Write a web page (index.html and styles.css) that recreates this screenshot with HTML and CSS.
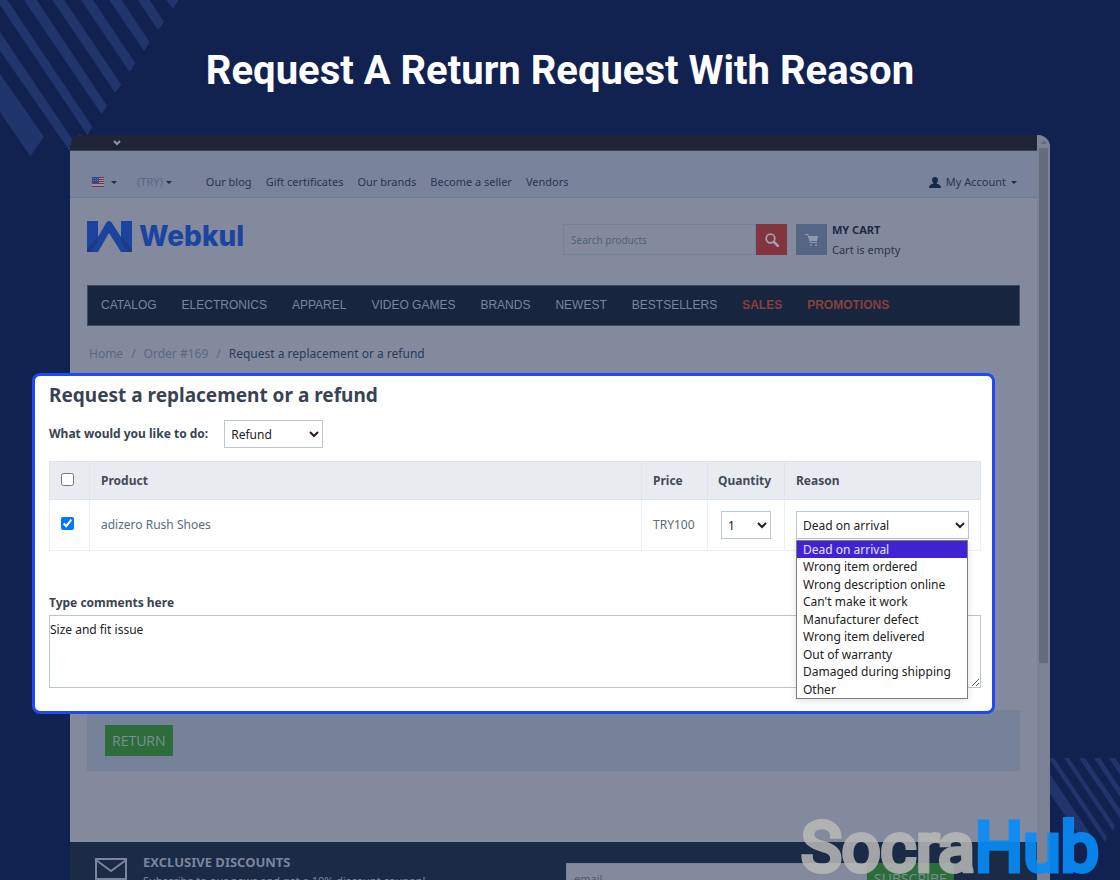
FILE: index.html
```html
<!DOCTYPE html>
<html lang="en">
<head>
    <meta charset="utf-8">
    <title>Request A Return Request With Reason</title>
    <link rel="stylesheet" href="styles.css">
</head>
<body>
<svg class="stripes stripes-top" viewBox="0 0 540 480" aria-hidden="true">
    <path d="M0 222L132 410L91 469L0 336zM0 95L221 424L214 460L0 152zM0 0H22L277 380L262 405L0 15zM72 0H110L321 317L305 343zM157 0H193L364 254L346 279zM243 0H279L406 190L389 216zM328 0H365L449 127L432 153zM413 0H449L492 65L474 90zM499 0H535L519 27z"/>
</svg>
<svg class="stripes stripes-bottom" viewBox="0 0 70 90" aria-hidden="true">
    <path d="M0 16L39 74L33 83L0 36zM0 0H4L57 79L55 84L0 2zM14 0H19L65 68L63 73zM29 0H35L74 57V66zM44 0H50L74 36V45zM59 0H65L74 14V23z"/>
</svg>

<h1 class="title">Request A Return Request With Reason</h1>

<div class="browser">
    <div class="site">
        <div class="topbar">
            <svg width="8" height="6" viewBox="0 0 8 6"><path d="M1 1l3 3 3-3" fill="none" stroke="#8d93a6" stroke-width="2"/></svg>
        </div>
        <div class="toolbar">
            <button class="plain language" aria-label="Language">
                <svg width="12" height="10" viewBox="0 0 12 10">
                    <rect width="12" height="10" fill="#9095a8"/>
                    <path d="M0 .5h12M0 2.500h12M0 4.500h12M0 6.500h12M0 9.500h12" stroke="#7d3249"/>
                    <rect width="7" height="6" fill="#31498a"/>
                    <path d="M1 1.500h5M1 3.500h5" stroke="#6677a3" stroke-dasharray="1 1"/>
                </svg>
                <span class="caret"></span>
            </button>
            <button class="plain currency">(TRY)<span class="caret"></span></button>
            <nav class="quick-links">
                <a href="#">Our blog</a>
                <a href="#">Gift certificates</a>
                <a href="#">Our brands</a>
                <a href="#">Become a seller</a>
                <a href="#">Vendors</a>
            </nav>
            <button class="plain account">
                <svg width="12" height="11" viewBox="0 0 12 11"><path d="M6 0c2 0 3 1.200 3 3S7.800 6 7.500 6.500c1.500.8 4.500 1 4.500 4.500H0c0-3.500 3-3.700 4.500-4.500C4.200 6 3 5 3 3s1-3 3-3z" fill="#18294a"/></svg>
                My Account<span class="caret"></span>
            </button>
        </div>
        <header class="header">
            <a href="#" class="logo">
                <svg width="45" height="31" viewBox="0 0 45 31">
                    <path d="M0 0h11v16L19 2q1-2 3-2t3 2l9 14V0h11v31H34L22 12 11 31H0z" fill="#1c449f"/>
                    <path d="M0 28L11 15v6L4 31H0zM45 28L34 15v6l7 10h4z" fill="#1d3b82"/>
                </svg>
                <span>Webkul</span>
            </a>
            <form class="search">
                <input type="text" placeholder="Search products" aria-label="Search products">
                <button type="button" aria-label="Search">
                    <svg width="14" height="14" viewBox="0 0 14 14"><circle cx="5.500" cy="5.500" r="4.300" fill="none" stroke="#a2a0ae" stroke-width="1.800"/><path d="M9 9l4 4" stroke="#a2a0ae" stroke-width="2.500" stroke-linecap="round"/></svg>
                </button>
            </form>
            <div class="cart">
                <span class="cart-icon">
                    <svg width="14" height="12" viewBox="0 0 14 12" fill="#8f98ad"><path d="M0 0h3l1 2h9l-1 5H5l1 1h6v1H5L2.500 1H0z"/><circle cx="6" cy="11" r="1"/><circle cx="11" cy="11" r="1"/></svg>
                </span>
                <div class="cart-text"><strong>MY CART</strong><span>Cart is empty</span></div>
            </div>
        </header>
        <nav class="menu">
            <a href="#">CATALOG</a>
            <a href="#">ELECTRONICS</a>
            <a href="#">APPAREL</a>
            <a href="#">VIDEO GAMES</a>
            <a href="#">BRANDS</a>
            <a href="#">NEWEST</a>
            <a href="#">BESTSELLERS</a>
            <a href="#" class="hot">SALES</a>
            <a href="#" class="hot">PROMOTIONS</a>
        </nav>
        <div class="breadcrumbs">
            <a href="#">Home</a><span class="slash">/</span><a href="#">Order #169</a><span class="slash">/</span><span class="current">Request a replacement or a refund</span>
        </div>

        <section class="request">
            <h2>Request a replacement or a refund</h2>
            <div class="action-row">
                <label for="action">What would you like to do:</label>
                <select id="action" class="action"><option>Refund</option><option>Replacement</option></select>
            </div>
            <table>
                <thead>
                <tr>
                    <th class="check"><input type="checkbox" aria-label="Select all"></th>
                    <th>Product</th>
                    <th class="price">Price</th>
                    <th class="quantity">Quantity</th>
                    <th class="reason">Reason</th>
                </tr>
                </thead>
                <tbody>
                <tr>
                    <td class="check"><input type="checkbox" aria-label="Select adizero Rush Shoes" checked></td>
                    <td><a href="#">adizero Rush Shoes</a></td>
                    <td class="price">TRY100</td>
                    <td class="quantity"><select aria-label="Quantity"><option>1</option></select></td>
                    <td class="reason">
                        <div class="dropdown">
                            <select aria-label="Reason"><option>Dead on arrival</option></select>
                            <ul class="options">
                                <li class="selected">Dead on arrival</li>
                                <li>Wrong item ordered</li>
                                <li>Wrong description online</li>
                                <li>Can't make it work</li>
                                <li>Manufacturer defect</li>
                                <li>Wrong item delivered</li>
                                <li>Out of warranty</li>
                                <li>Damaged during shipping</li>
                                <li>Other</li>
                            </ul>
                        </div>
                    </td>
                </tr>
                </tbody>
            </table>
            <label for="comments" class="comments-label">Type comments here</label>
            <textarea id="comments">Size and fit issue</textarea>
        </section>

        <div class="buttons"><button>RETURN</button></div>

        <footer class="footer">
            <svg width="32" height="22" viewBox="0 0 32 22" fill="none" stroke="#7c859d" stroke-width="2"><path d="M1 1h30v20H1zM1 2l15 11L31 2"/></svg>
            <div class="discounts">
                <h3>EXCLUSIVE DISCOUNTS</h3>
                <p>Subscribe to our news and get a 10% discount coupon!</p>
            </div>
            <form class="subscribe">
                <input type="text" placeholder="email" aria-label="email">
                <button type="button">SUBSCRIBE</button>
            </form>
        </footer>
    </div>
    <div class="scrollbar"><span class="arrow-up"></span><span class="thumb"></span></div>
</div>

<div class="watermark"><span class="socra">Socra</span><span class="hub">Hub</span></div>
</body>
</html>
```

FILE: styles.css
```css
* {
    box-sizing: border-box;
}

body {
    margin: 0;
    height: 100vh;
    position: relative;
    overflow: hidden;
    background: #112150;
    color: #26364f;
    font: 12px/18px "Noto Sans", "Open Sans", sans-serif;
}

a {
    color: inherit;
    text-decoration: none;
}

input,
select,
textarea,
button {
    font: inherit;
}

.stripes {
    position: absolute;
    fill: #20356c;
}

.stripes-top {
    top: 0;
    left: 0;
    width: 180px;
}

.stripes-bottom {
    right: 0;
    bottom: 32px;
    width: 70px;
}

.title {
    position: relative;
    margin: 0;
    padding: 47px 0 40px;
    color: #fff;
    font: 700 40px/48px Roboto, sans-serif;
    text-align: center;
}

.browser {
    position: relative;
    display: flex;
    margin: 0 70px;
    border-radius: 13px 13px 0 0;
    background: #848a9e;
}

.site {
    flex: 1;
    min-width: 0;
}

.topbar {
    height: 16px;
    padding-left: 43px;
    border-bottom: 1px solid #36435a;
    border-radius: 12px 0 0 0;
    background: #1f2537;
}

.topbar svg {
    display: block;
    padding-top: 5px;
    height: 11px;
}

.toolbar {
    display: flex;
    align-items: center;
    height: 47px;
    padding: 16px 20px 0 22px;
    border-bottom: 1px solid #667894;
    background: #79849c;
    font-size: 11px;
}

.plain {
    display: flex;
    align-items: center;
    padding: 0;
    border: 0;
    background: none;
    color: inherit;
}

.caret {
    border: 3px solid transparent;
    border-top-color: #1b2a45;
    border-bottom: 0;
}

.language {
    gap: 7px;
}

.currency {
    margin-left: 20px;
    color: #566a89;
    gap: 3px;
}

.quick-links {
    display: flex;
    gap: 14px;
    margin-left: 34px;
}

.account {
    gap: 5px;
    margin-left: auto;
}

.header {
    display: flex;
    align-items: flex-start;
    height: 87px;
    padding: 22px 17px 0;
}

.logo {
    display: flex;
    align-items: center;
    gap: 7px;
    color: #1c449f;
    font: 800 28px/32px Inter, sans-serif;
}

.search {
    display: flex;
    width: 224px;
    height: 31px;
    margin: 4px 9px 0 auto;
}

.search input {
    flex: 1;
    min-width: 0;
    padding: 0 7px;
    border: 1px solid #73839a;
    background: none;
    font-size: 10px;
}

.search input::placeholder {
    color: #4f607c;
}

.search button {
    width: 31px;
    padding: 0;
    border: 0;
    background: #82353f;
}

.search svg {
    display: block;
    margin: 0 auto;
}

.cart {
    display: flex;
    gap: 5px;
    width: 224px;
    padding-top: 4px;
}

.cart-icon {
    display: flex;
    align-items: center;
    justify-content: center;
    width: 31px;
    height: 31px;
    background: #546684;
}

.cart-text {
    display: flex;
    flex-direction: column;
    font-size: 11px;
    line-height: 20px;
    margin-top: -4px;
}

.cart-text strong {
    color: #1b2a45;
}

.menu {
    display: flex;
    gap: 25px;
    height: 41px;
    margin: 0 17px;
    padding: 0 13px;
    border: 1px solid #3c4a62;
    background: #17253f;
    color: #7b869d;
    font: 12px/38px "Liberation Sans", Arial, sans-serif;
}

.menu .hot {
    color: #873f3d;
    font-weight: bold;
}

.breadcrumbs {
    display: flex;
    padding: 19px 19px 10px;
    color: #566884;
}

.breadcrumbs .slash {
    margin: 0 8px;
}

.breadcrumbs .current {
    color: #283c5b;
}

.request {
    position: relative;
    z-index: 1;
    margin: 0 42px 0 -38px;
    padding: 7px 11px 23px 14px;
    border: 3px solid #2049f5;
    border-radius: 8px;
    background: #fff;
    color: #384353;
}

.request h2 {
    margin: 0;
    font-size: 19px;
    line-height: 24px;
}

.action-row {
    display: flex;
    align-items: center;
    gap: 16px;
    margin: 13px 0;
}

.request label {
    font-weight: bold;
}

.request select {
    display: block;
    height: 28px;
    padding: 0 2px;
    border: 1px solid #b8c6d6;
    border-radius: 0;
    background: #fff;
    color: #222;
}

.request .action {
    width: 99px;
}

table {
    width: 100%;
    border-collapse: collapse;
}

th,
td {
    padding: 0 11px;
    border: 1px solid #edf0f3;
    text-align: left;
}

th {
    height: 38px;
    border-color: #dfe4ea;
    background: #e8ebf0;
    color: #444b56;
}

td {
    height: 51px;
    color: #5a6b79;
}

.check {
    width: 40px;
    padding-bottom: 3px;
}

.check input {
    display: block;
    width: 13px;
    height: 13px;
    margin: 0;
}

.price {
    width: 66px;
}

th.quantity {
    width: 76px;
    padding: 0 10px;
}

td.quantity {
    padding: 0 13px;
}

.quantity select {
    width: 50px;
}

.reason {
    width: 196px;
}

.dropdown {
    position: relative;
}

.dropdown select {
    width: 173px;
}

.options {
    position: absolute;
    top: 29px;
    left: 0;
    display: grid;
    grid-auto-rows: 1fr;
    width: 172px;
    height: 159px;
    margin: 0;
    padding: 0;
    border: 1px solid #7c7c7c;
    background: #fff;
    box-shadow: 0 2px 8px rgba(0, 0, 0, .12);
    color: #222;
    list-style: none;
}

.options li {
    padding-left: 6px;
    line-height: 17px;
}

.options .selected {
    background: #4024d3;
    color: #e6e2fb;
}

.request .comments-label {
    display: block;
    margin: 43px 0 3px;
}

textarea {
    display: block;
    width: 100%;
    height: 73px;
    padding: 5px 0;
    border: 1px solid #b8c6d0;
    color: #222;
}

.buttons {
    margin: -4px 17px 71px;
    padding: 15px 18px;
    background: #768299;
}

.buttons button,
.subscribe button {
    display: block;
    height: 31px;
    padding: 0 7px;
    border: 0;
    background: #2c6d3b;
    color: #7c8d96;
    font-family: "Open Sans", sans-serif;
    font-size: 14px;
}

.footer {
    display: flex;
    align-items: flex-start;
    height: 100px;
    padding: 11px 17px 0 25px;
    background: #1b2a45;
    color: #7c859d;
}

.footer > svg {
    margin-top: 5px;
}

.discounts {
    margin-left: 16px;
    font-size: 11px;
}

.discounts h3 {
    margin: 0;
    font-size: 13px;
    line-height: 18px;
}

.discounts p {
    margin: 1px 0 0;
}

.subscribe {
    display: flex;
    width: 454px;
    height: 31px;
    margin: 10px 0 0 auto;
}

.subscribe input {
    width: 301px;
    padding: 0 7px;
    border: 1px solid #75839b;
    background: #848a9e;
    font-size: 11px;
}

.subscribe input::placeholder {
    color: #4b5b77;
}

.scrollbar {
    width: 13px;
    padding: 5px 2px;
    border-radius: 0 12px 0 0;
    background: #7c8295;
}

.arrow-up {
    display: block;
    width: 6px;
    margin: 0 auto 4px;
    border: 3px solid transparent;
    border-bottom: 4px solid #646a80;
    border-top: 0;
}

.thumb {
    display: block;
    height: 515px;
    background: #666b80;
}

.watermark {
    position: absolute;
    z-index: 2;
    right: 21px;
    bottom: -8px;
    font: 400 68px/80px Roboto, sans-serif;
    paint-order: stroke;
    stroke-linejoin: round;
}

.socra {
    color: #b9b9b9;
    -webkit-text-stroke: 5px #b9b9b9;
    opacity: .85;
}

.hub {
    color: #068dfa;
    -webkit-text-stroke: 5px #068dfa;
    opacity: .9;
}
```
